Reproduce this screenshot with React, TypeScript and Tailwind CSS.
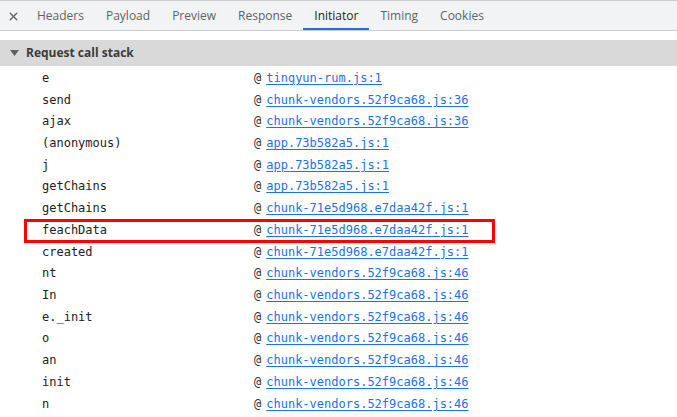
import { X } from "lucide-react";

const tabs = ["Headers", "Payload", "Preview", "Response", "Initiator", "Timing", "Cookies"];

const frames: [string, string][] = [
  ["e", "tingyun-rum.js:1"],
  ["send", "chunk-vendors.52f9ca68.js:36"],
  ["ajax", "chunk-vendors.52f9ca68.js:36"],
  ["(anonymous)", "app.73b582a5.js:1"],
  ["j", "app.73b582a5.js:1"],
  ["getChains", "app.73b582a5.js:1"],
  ["getChains", "chunk-71e5d968.e7daa42f.js:1"],
  ["feachData", "chunk-71e5d968.e7daa42f.js:1"],
  ["created", "chunk-71e5d968.e7daa42f.js:1"],
  ["nt", "chunk-vendors.52f9ca68.js:46"],
  ["In", "chunk-vendors.52f9ca68.js:46"],
  ["e._init", "chunk-vendors.52f9ca68.js:46"],
  ["o", "chunk-vendors.52f9ca68.js:46"],
  ["an", "chunk-vendors.52f9ca68.js:46"],
  ["init", "chunk-vendors.52f9ca68.js:46"],
  ["n", "chunk-vendors.52f9ca68.js:46"],
];

export default function App() {
  return (
    <div className="w-[677px] h-[417px] overflow-hidden bg-white font-['Open_Sans',sans-serif]">
      {/* tab strip */}
      <div className="flex items-stretch h-[31px] bg-[#f1f3f4] border-t border-b border-[#cbcdd1]">
        <div className="flex items-center justify-center w-[26px] pt-[2px] text-[#5f6368]">
          <X size={13} strokeWidth={2.5} />
        </div>
        {tabs.map((t) => (
          <div
            key={t}
            className={
              t === "Initiator"
                ? "flex items-center px-[11px] pt-[3px] text-[12px] text-[#1f1f1f] border-b-2 border-[#1a73e8]"
                : "flex items-center px-[11px] pt-[3px] text-[12px] text-[#5f6368] border-b-2 border-transparent"
            }
          >
            {t}
          </div>
        ))}
      </div>

      <div className="h-[9px]" />

      {/* section header */}
      <div className="flex items-center h-[26px] bg-[#d9d9d9] pl-[10px] gap-[7px]">
        <svg width="9" height="7" viewBox="0 0 9 7">
          <path d="M0 0 L9 0 L4.5 6 Z" fill="#5f6368" />
        </svg>
        <span className="text-[12px] font-bold text-[#3c3c3c]">Request call stack</span>
      </div>

      {/* stack frames */}
      <div className="pt-px font-['DejaVu_Sans_Mono',monospace] text-[12px]">
        {frames.map(([fn, src], i) => (
          <div key={i} className="relative flex items-center h-[21.73px]">
            {fn === "feachData" && (
              <div className="absolute left-[24px] w-[471px] top-[0px] h-[24px] border-[3px] border-[#f00]" />
            )}
            <span className="w-[254px] shrink-0 pl-[42px] text-[#222]">{fn}</span>
            <span className="text-[#333]">@</span>
            <span className="ml-[5px] text-[#1a73e8] underline underline-offset-2">{src}</span>
          </div>
        ))}
      </div>
    </div>
  );
}
